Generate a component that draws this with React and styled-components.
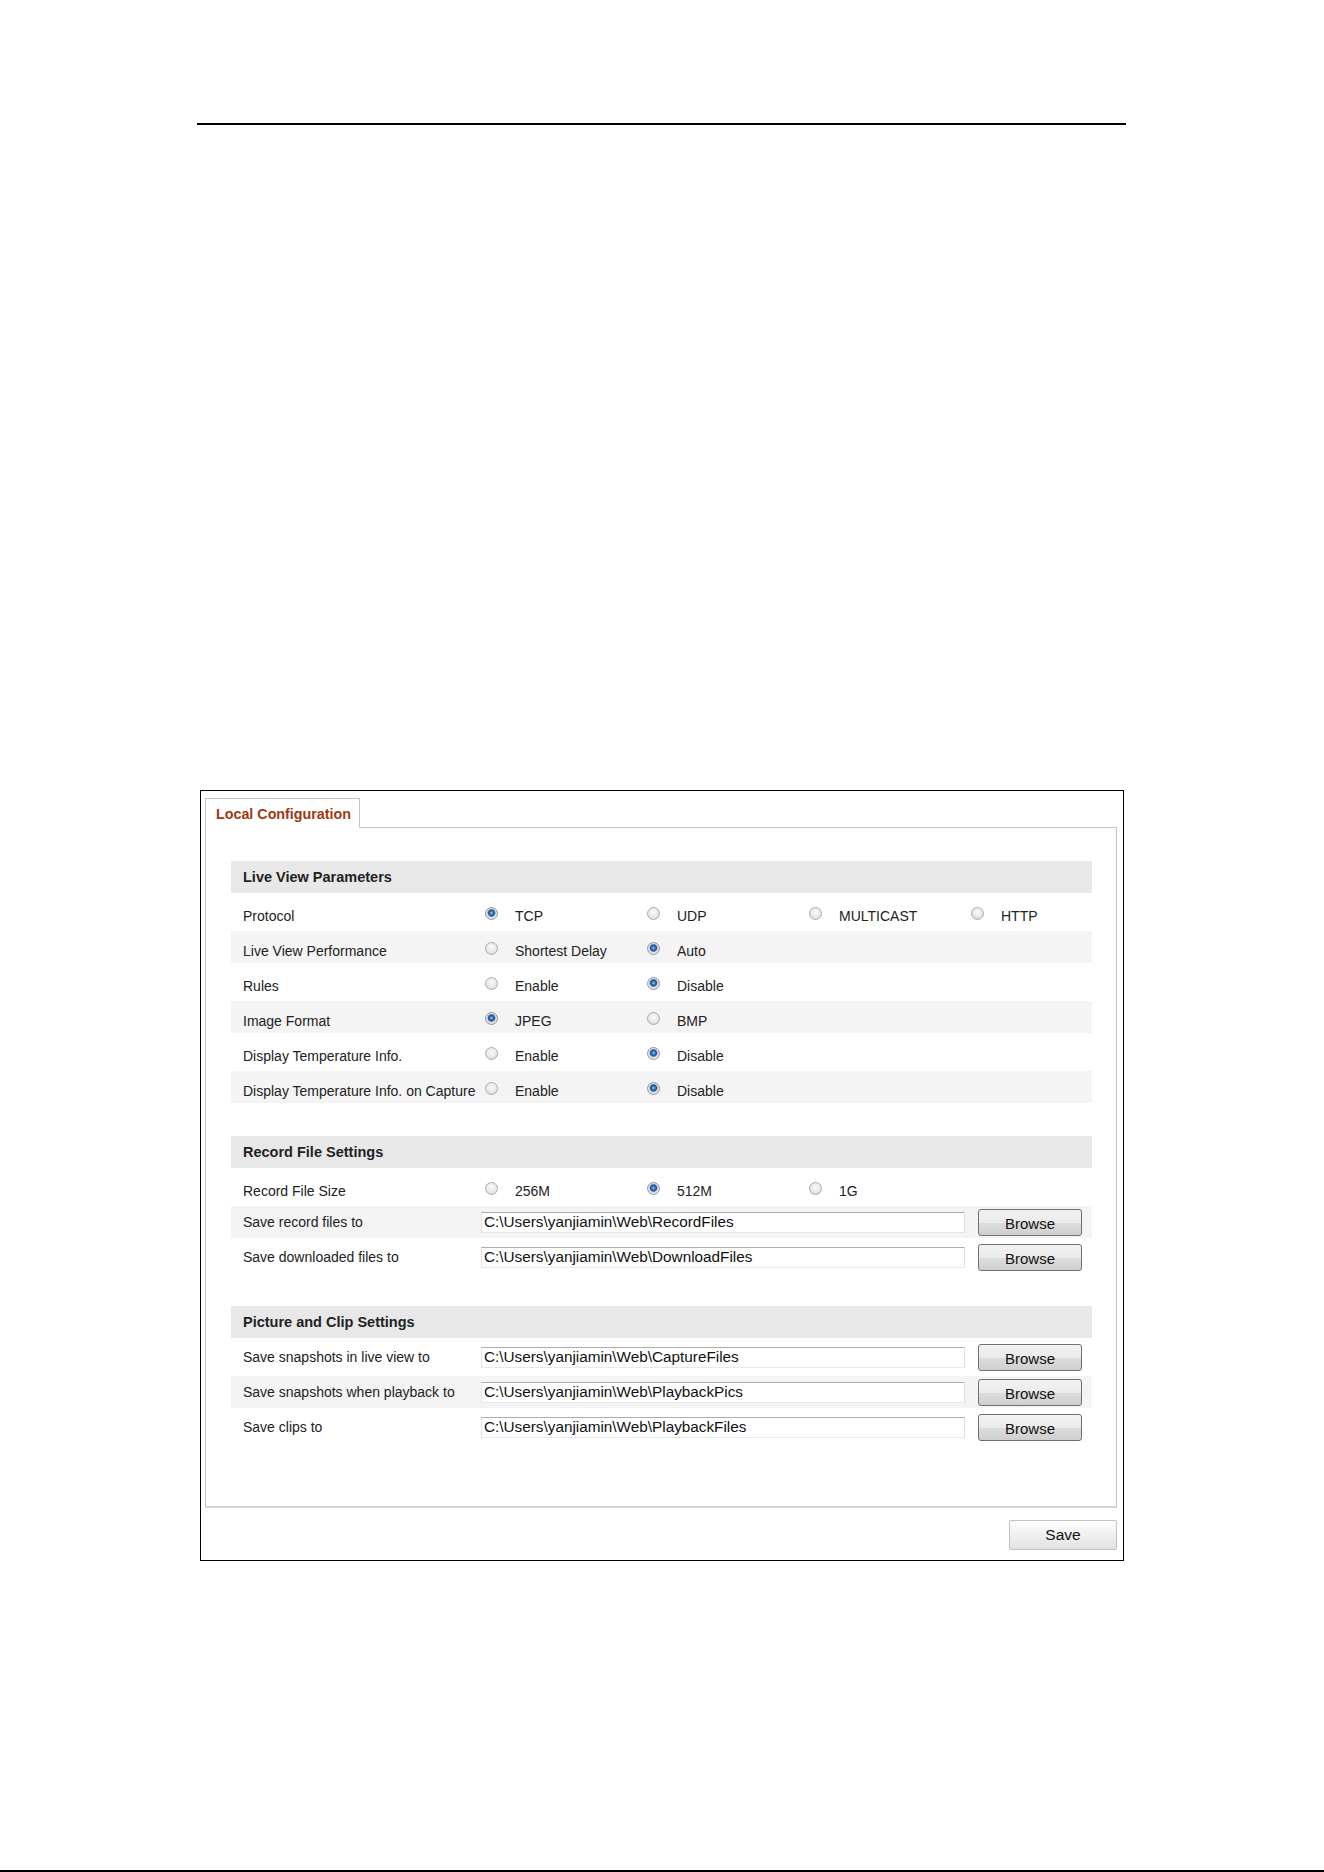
import React from "react";
import styled, { createGlobalStyle } from "styled-components";

const GlobalStyle = createGlobalStyle`
  html, body {
    margin: 0;
    padding: 0;
    background: #fff;
    overflow: hidden;
  }
  body {
    font-family: "Liberation Sans", Arial, sans-serif;
    color: #222;
  }
`;

const Page = styled.div`
  width: 1324px;
  height: 1872px;
  box-sizing: border-box;
  padding-top: 123px;
  border-bottom: 2px solid #000;
`;

const TopRule = styled.div`
  margin-left: 197px;
  width: 929px;
  height: 2px;
  background: #000;
`;

const Panel = styled.div`
  margin: 665px 0 0 200px;
  width: 924px;
  height: 771px;
  box-sizing: border-box;
  border: 1px solid #000;
  padding: 7px 6px 0 4px;
  display: flex;
  flex-direction: column;
`;

const TabBar = styled.div`
  display: flex;
`;

const Tab = styled.div`
  position: relative;
  z-index: 1;
  width: 155px;
  height: 30px;
  box-sizing: border-box;
  margin-bottom: -1px;
  border: 1px solid #c4c4c4;
  border-bottom-color: #fff;
  background: #fff;
  display: flex;
  align-items: center;
  padding: 2px 0 0 10px;
  color: #9c3a10;
  font-weight: bold;
  font-size: 14.3px;
`;

const Content = styled.div`
  height: 681px;
  box-sizing: border-box;
  border: 1px solid #c4c4c4;
  border-bottom: 2px solid #d4d4d4;
  padding: 33px 24px 0 25px;
`;

const Section = styled.section`
  display: flex;
  flex-direction: column;
  gap: 3px;
  margin-bottom: 33px;
`;

const SectionHead = styled.div`
  height: 32px;
  display: flex;
  align-items: center;
  padding-left: 12px;
  background: #e8e8e8;
  font-weight: bold;
  font-size: 14.5px;
  color: #222;
`;

const Row = styled.div`
  height: 32px;
  box-sizing: border-box;
  display: flex;
  align-items: center;
  padding-top: ${(p) => (p.$radio ? "7px" : "0")};
  background: ${(p) => (p.$striped ? "#f4f4f4" : "transparent")};
  font-size: 14px;
`;

const Label = styled.div`
  width: 250px;
  flex-shrink: 0;
  box-sizing: border-box;
  padding-left: 12px;
  white-space: nowrap;
`;

const Option = styled.div`
  width: 162px;
  flex-shrink: 0;
  display: flex;
  align-items: center;
  white-space: nowrap;
`;

const Radio = styled.span`
  width: 13px;
  height: 13px;
  box-sizing: border-box;
  margin: 0 17px 5px 4px;
  border-radius: 50%;
  border: 1px solid ${(p) => (p.$checked ? "#8e98a4" : "#adadad")};
  background: ${(p) =>
    p.$checked
      ? "radial-gradient(circle at 50% 45%, #a8d8ff 0, #3a80cf 1.4px, #1d5298 3px, #7f95ae 3.7px, #dcdcdc 4.3px, #f4f4f4 100%)"
      : "radial-gradient(circle at 50% 40%, #fbfbfb 0, #e8e8e8 55%, #cdcdcd 100%)"};
`;

const PathInput = styled.input`
  width: 484px;
  height: 21px;
  box-sizing: border-box;
  margin: 0 13px 0 0;
  padding: 0 2px;
  border: 1px solid;
  border-color: #abadb3 #dbdfe6 #e3e9ef #e2e3ea;
  font-family: "Liberation Sans", Arial, sans-serif;
  font-size: 15.3px;
  color: #111;
  background: #fff;
  outline: none;
`;

const BrowseButton = styled.button`
  width: 104px;
  height: 27px;
  padding: 2px 0 0;
  border: 1px solid #707070;
  border-radius: 3px;
  background: linear-gradient(#f2f2f2 0%, #ebebeb 50%, #dddddd 51%, #cfcfcf 100%);
  font-family: "Liberation Sans", Arial, sans-serif;
  font-size: 15px;
  color: #111;
`;

const Footer = styled.div`
  display: flex;
  justify-content: flex-end;
  margin-top: 12px;
`;

const SaveButton = styled.button`
  width: 108px;
  height: 30px;
  border: 1px solid #c2c2c2;
  border-radius: 2px;
  background: linear-gradient(#fdfdfd, #e2e2e2);
  font-family: "Liberation Sans", Arial, sans-serif;
  font-size: 15.5px;
  color: #111;
`;

const liveView = [
  { label: "Protocol", options: ["TCP", "UDP", "MULTICAST", "HTTP"], value: 0 },
  { label: "Live View Performance", options: ["Shortest Delay", "Auto"], value: 1 },
  { label: "Rules", options: ["Enable", "Disable"], value: 1 },
  { label: "Image Format", options: ["JPEG", "BMP"], value: 0 },
  { label: "Display Temperature Info.", options: ["Enable", "Disable"], value: 1 },
  { label: "Display Temperature Info. on Capture", options: ["Enable", "Disable"], value: 1 },
];

const recordPaths = [
  { label: "Save record files to", path: "C:\\Users\\yanjiamin\\Web\\RecordFiles" },
  { label: "Save downloaded files to", path: "C:\\Users\\yanjiamin\\Web\\DownloadFiles" },
];

const picturePaths = [
  { label: "Save snapshots in live view to", path: "C:\\Users\\yanjiamin\\Web\\CaptureFiles" },
  { label: "Save snapshots when playback to", path: "C:\\Users\\yanjiamin\\Web\\PlaybackPics" },
  { label: "Save clips to", path: "C:\\Users\\yanjiamin\\Web\\PlaybackFiles" },
];

function RadioRow({ label, options, value, striped }) {
  return (
    <Row $radio $striped={striped}>
      <Label>{label}</Label>
      {options.map((opt, i) => (
        <Option key={opt}>
          <Radio $checked={i === value} />
          {opt}
        </Option>
      ))}
    </Row>
  );
}

function PathRow({ label, path, striped }) {
  return (
    <Row $striped={striped}>
      <Label>{label}</Label>
      <PathInput readOnly defaultValue={path} />
      <BrowseButton>Browse</BrowseButton>
    </Row>
  );
}

export default function App() {
  return (
    <Page>
      <GlobalStyle />
      <TopRule />
      <Panel>
        <TabBar>
          <Tab>Local Configuration</Tab>
        </TabBar>
        <Content>
          <Section>
            <SectionHead>Live View Parameters</SectionHead>
            {liveView.map((r, i) => (
              <RadioRow key={r.label} {...r} striped={i % 2 === 1} />
            ))}
          </Section>

          <Section>
            <SectionHead>Record File Settings</SectionHead>
            <RadioRow label="Record File Size" options={["256M", "512M", "1G"]} value={1} />
            {recordPaths.map((r, i) => (
              <PathRow key={r.label} {...r} striped={i % 2 === 0} />
            ))}
          </Section>

          <Section>
            <SectionHead>Picture and Clip Settings</SectionHead>
            {picturePaths.map((r, i) => (
              <PathRow key={r.label} {...r} striped={i % 2 === 1} />
            ))}
          </Section>
        </Content>
        <Footer>
          <SaveButton>Save</SaveButton>
        </Footer>
      </Panel>
    </Page>
  );
}
